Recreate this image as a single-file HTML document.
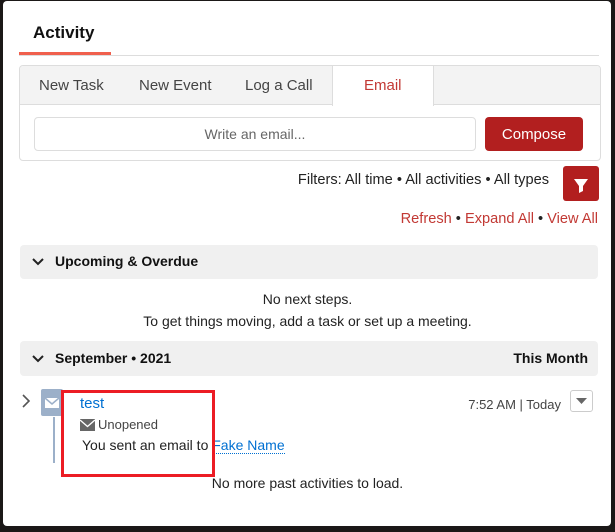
<!DOCTYPE html>
<html><head><meta charset="utf-8"><style>
*{margin:0;padding:0;box-sizing:border-box}
body{width:615px;height:532px;background:#1b1817;position:relative;overflow:hidden;font-family:"Liberation Sans",sans-serif;color:#222}
.card{position:absolute;left:3px;top:1px;width:608px;height:525px;background:#fff;border-radius:4px}
.a{position:absolute;white-space:nowrap}
.red{color:#c23934}
</style></head><body>
<div class="card"></div>
<div class="a" style="left:33px;top:23px;font-size:17px;font-weight:bold;color:#111">Activity</div>
<div class="a" style="left:19px;top:55px;width:580px;height:1px;background:#ddd"></div>
<div class="a" style="left:19px;top:52px;width:92px;height:3px;background:#f0604d"></div>

<div class="a" style="left:19px;top:65px;width:582px;height:96px;border:1px solid #ddd;border-radius:4px;background:#fff"></div>
<div class="a" style="left:20px;top:66px;width:580px;height:39px;background:#f3f3f3;border-bottom:1px solid #ddd;border-radius:3px 3px 0 0"></div>
<div class="a" style="left:332px;top:66px;width:102px;height:40px;background:#fff;border-left:1px solid #ddd;border-right:1px solid #ddd"></div>
<div class="a" style="left:39px;top:77px;font-size:15px;color:#444">New Task</div>
<div class="a" style="left:139px;top:77px;font-size:15px;color:#444">New Event</div>
<div class="a" style="left:245px;top:77px;font-size:15px;color:#444">Log a Call</div>
<div class="a red" style="left:364px;top:77px;font-size:15px">Email</div>
<div class="a" style="left:34px;top:117px;width:442px;height:34px;border:1px solid #ddd;border-radius:4px;text-align:center;line-height:32px;font-size:14px;color:#666">Write an email...</div>
<div class="a" style="left:485px;top:117px;width:98px;height:34px;background:#b21f1f;border-radius:4px;color:#fff;text-align:center;line-height:35px;font-size:15px">Compose</div>

<div class="a" style="right:66px;top:172px;font-size:14.6px;color:#222">Filters: All time • All activities • All types</div>
<div class="a" style="left:563px;top:166px;width:36px;height:35px;background:#b21f1f;border-radius:3px"><svg width="36" height="35"><path d="M11 13h14l-5 7v5l-4 2v-7z" fill="#fff"/></svg></div>
<div class="a" style="right:17px;top:211px;font-size:14.6px"><span class="red">Refresh</span> • <span class="red">Expand All</span> • <span class="red">View All</span></div>

<div class="a" style="left:20px;top:245px;width:578px;height:34px;background:#f0f0f0;border-radius:4px"></div>
<svg class="a" style="left:31px;top:256px" width="14" height="12"><path d="M2 3l5 5 5-5" stroke="#222" stroke-width="2" fill="none"/></svg>
<div class="a" style="left:55px;top:253px;font-size:14px;font-weight:bold;color:#111">Upcoming &amp; Overdue</div>
<div class="a" style="left:0;width:615px;top:291px;font-size:14px;text-align:center">No next steps.</div>
<div class="a" style="left:0;width:615px;top:313px;font-size:14px;text-align:center">To get things moving, add a task or set up a meeting.</div>

<div class="a" style="left:20px;top:341px;width:578px;height:35px;background:#f0f0f0;border-radius:4px"></div>
<svg class="a" style="left:31px;top:353px" width="14" height="12"><path d="M2 3l5 5 5-5" stroke="#222" stroke-width="2" fill="none"/></svg>
<div class="a" style="left:55px;top:350px;font-size:14px;font-weight:bold;color:#111">September • 2021</div>
<div class="a" style="right:27px;top:350px;font-size:14px;font-weight:bold;color:#111">This Month</div>

<svg class="a" style="left:20px;top:393px" width="12" height="16"><path d="M3 2l6 6-6 6" stroke="#555" stroke-width="1.6" fill="none"/></svg>
<div class="a" style="left:41px;top:389px;width:22px;height:27px;background:#9cb0c9;border-radius:2px"><svg width="22" height="27"><path d="M4 9h14v10H4z" fill="#fff"/><path d="M4 9l7 6 7-6" stroke="#9cb0c9" stroke-width="1.5" fill="none"/></svg></div>
<div class="a" style="left:53px;top:417px;width:2px;height:46px;background:#9cb0c9"></div>
<div class="a" style="left:80px;top:395px;font-size:15px;color:#0070d2">test</div>
<svg class="a" style="left:80px;top:419px" width="15" height="12"><rect x="0" y="0" width="15" height="12" fill="#666"/><path d="M0 1l7.5 6.5 7.5-6.5" stroke="#fff" stroke-width="1.4" fill="none"/></svg>
<div class="a" style="left:98px;top:417px;font-size:13px;color:#444">Unopened</div>
<div class="a" style="left:82px;top:437px;font-size:14px">You sent an email to <span style="color:#0070d2;border-bottom:1px dotted #0070d2">Fake Name</span></div>
<div class="a" style="right:54px;top:397px;font-size:13px;color:#444">7:52 AM | Today</div>
<div class="a" style="left:570px;top:390px;width:23px;height:22px;border:1px solid #ccc;border-radius:3px"><svg width="21" height="20"><path d="M5 7h11l-5.5 6z" fill="#666"/></svg></div>
<div class="a" style="left:61px;top:390px;width:154px;height:87px;border:3px solid #ec1c24"></div>
<div class="a" style="left:0;width:615px;top:475px;font-size:14px;text-align:center">No more past activities to load.</div>
</body></html>
